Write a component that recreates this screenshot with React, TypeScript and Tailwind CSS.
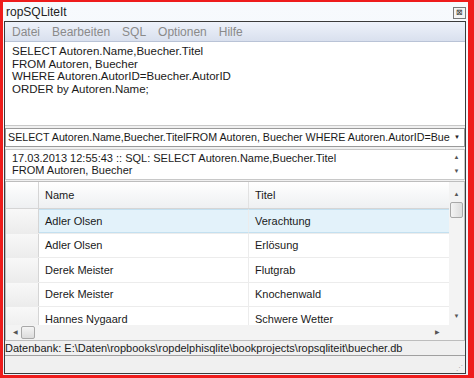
import React from "react";

const rows = [
  { name: "Adler Olsen", titel: "Verachtung" },
  { name: "Adler Olsen", titel: "Erlösung" },
  { name: "Derek Meister", titel: "Flutgrab" },
  { name: "Derek Meister", titel: "Knochenwald" },
  { name: "Hannes Nygaard", titel: "Schwere Wetter" },
];

const font = { fontFamily: "Tahoma, 'Liberation Sans', Arial, sans-serif" };

export default function App() {
  return (
    <div
      className="w-[474px] h-[378px] bg-[#ee1c1c] pl-[3px] pr-[6px] pt-[2px] pb-[3px] overflow-hidden text-[11px] text-[#1a1a1a]"
      style={font}
    >
      <div className="flex flex-col h-full bg-gradient-to-b from-[#f7fafd] to-[#e9f0f8]">
        {/* Title bar */}
        <div className="h-[19px] flex items-center justify-between pl-[3px] pr-[2px]">
          <span className="text-[12px] text-[#222]">ropSQLiteIt</span>
          <div className="w-[13px] h-[12px] border border-[#777] bg-[#f4f4f4] flex items-center justify-center text-[8px] leading-none text-[#333] mt-[3px]">
            ⊠
          </div>
        </div>

        {/* Window body */}
        <div className="flex-1 flex flex-col border border-[#3a3a3a] ml-[1px] mr-[2px] mb-[1px] bg-[#f0f0f0] min-h-0">
          {/* Menu */}
          <div className="h-[20px] flex items-center gap-[12px] pl-[7px] bg-gradient-to-b from-[#eef2fa] to-[#d9e0ee] border-b border-[#b9c3d6] text-[12px] text-[#8a8a8a]">
            <span>Datei</span>
            <span>Bearbeiten</span>
            <span>SQL</span>
            <span>Optionen</span>
            <span>Hilfe</span>
          </div>

          {/* SQL memo */}
          <div className="h-[84px] bg-white border-b border-[#c8c8c8] px-[7px] pt-[3px] leading-[12.5px] text-[11.5px]">
            <div>SELECT Autoren.Name,Buecher.Titel</div>
            <div>FROM Autoren, Buecher</div>
            <div>WHERE Autoren.AutorID=Buecher.AutorID</div>
            <div>ORDER by Autoren.Name;</div>
          </div>

          {/* Combo */}
          <div className="pt-[2px] pb-[2px]">
            <div className="h-[19px] bg-white border border-[#9a9a9a] flex items-center pl-[2px] pr-[4px]">
              <span className="flex-1 whitespace-nowrap overflow-hidden text-[10.7px]">
                SELECT Autoren.Name,Buecher.TitelFROM Autoren, Buecher WHERE Autoren.AutorID=Bueche
              </span>
              <span className="text-[6px] text-[#222] ml-[4px]">▼</span>
            </div>
          </div>

          {/* Log memo */}
          <div className="h-[31px] bg-white border border-[#c8c8c8] flex">
            <div className="flex-1 pl-[6px] pt-[2px] leading-[12px]">
              <div>17.03.2013 12:55:43 :: SQL: SELECT Autoren.Name,Buecher.Titel</div>
              <div>FROM Autoren, Buecher</div>
            </div>
            <div className="w-[15px] flex flex-col items-center justify-between py-[3px] text-[6px] text-[#555]">
              <span>▲</span>
              <span>▼</span>
            </div>
          </div>

          {/* Grid */}
          <div className="mt-[1px] h-[160px] bg-white border border-[#bdbdbd] flex flex-col">
            <div className="flex flex-1 min-h-0">
              <div className="flex-1 flex flex-col overflow-hidden">
                {/* Header */}
                <div className="h-[27px] shrink-0 flex bg-gradient-to-b from-white to-[#eef0f2] border-b border-[#d5d5d5]">
                  <div className="w-[33px] border-r border-[#d5d5d5]" />
                  <div className="w-[210px] border-r border-[#e2e2e2] pl-[6px] flex items-center">Name</div>
                  <div className="flex-1 pl-[6px] flex items-center">Titel</div>
                </div>
                {rows.map((r, i) => (
                  <div key={i} className="h-[24.5px] shrink-0 flex border-b border-[#ececec]">
                    <div className="w-[33px] bg-gradient-to-b from-[#f8f8f8] to-[#ececec] border-r border-[#d5d5d5]" />
                    <div
                      className={`w-[210px] border-r border-[#ececec] pl-[6px] flex items-center ${
                        i === 0 ? "bg-[#e3f2fa] border-y border-y-[#c3e0f0]" : ""
                      }`}
                    >
                      {r.name}
                    </div>
                    <div
                      className={`flex-1 pl-[6px] flex items-center ${
                        i === 0 ? "bg-[#e3f2fa] border-y border-y-[#c3e0f0]" : ""
                      }`}
                    >
                      {r.titel}
                    </div>
                  </div>
                ))}
              </div>
              {/* Vertical scrollbar */}
              <div className="w-[15px] bg-[#f3f3f3] flex flex-col items-center pt-[8px] pb-[4px] text-[6px] text-[#555]">
                <span>▲</span>
                <div className="mt-[3px] w-[13px] h-[16px] border border-[#a8a8a8] rounded-[2px] bg-gradient-to-r from-[#f4f4f4] to-[#dcdcdc]" />
                <div className="flex-1" />
                <span>▼</span>
              </div>
            </div>
            {/* Horizontal scrollbar */}
            <div className="h-[15px] bg-[#f3f3f3] flex items-center pl-[7px] pr-[24px] text-[6px] text-[#555]">
              <span>◀</span>
              <div className="ml-[3px] w-[14px] h-[13px] border border-[#a8a8a8] rounded-[2px] bg-gradient-to-b from-[#f4f4f4] to-[#dcdcdc]" />
              <div className="flex-1" />
              <span>▶</span>
            </div>
          </div>

          {/* Status */}
          <div className="h-[15px] flex items-center border-b border-[#a0a0a0] bg-[#f0f0f0] whitespace-nowrap">
            Datenbank: E:\Daten\ropbooks\ropdelphisqlite\bookprojects\ropsqliteit\buecher.db
          </div>
          <div className="flex-1 bg-[#f0f0f0] flex justify-end items-end p-[2px]">
            <span className="text-[7px] leading-none text-[#aaa]">⋰</span>
          </div>
        </div>
      </div>
    </div>
  );
}
